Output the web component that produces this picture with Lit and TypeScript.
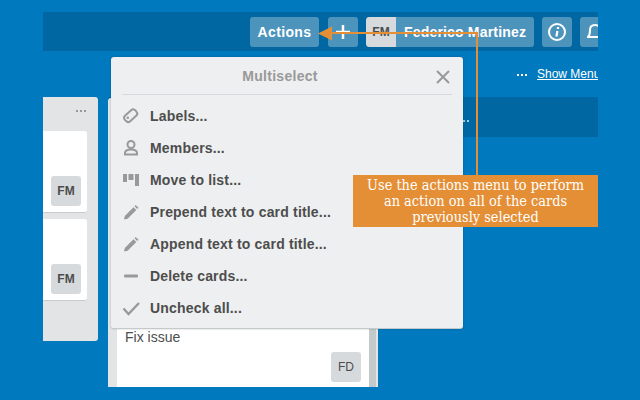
import { LitElement, html, css, svg } from "lit";
import { customElement } from "lit/decorators.js";

const icons: Record<string, unknown> = {
  tag: svg`<rect x="1.500" y="5" width="14" height="7.500" rx="3" fill="none" stroke="#999" stroke-width="2" transform="rotate(-42 8.500 8.500)"/><circle cx="5.800" cy="10.800" r="1.300" fill="#999"/>`,
  user: svg`<circle cx="9" cy="5.500" r="3.500" fill="none" stroke="#999" stroke-width="2"/><path d="M3 15.500v-1.500c0-2.200 2-3.500 6-3.500s6 1.300 6 3.500v1.500z" fill="none" stroke="#999" stroke-width="2"/>`,
  list: svg`<rect x="1" y="3" width="4" height="8" fill="#999"/><rect x="6.500" y="3" width="5" height="6" fill="#999"/><rect x="13" y="3" width="4" height="12" fill="#999"/>`,
  pen: svg`<path d="M2 16.500l.8-3.600L11.500 4.200l2.800 2.800L5.600 15.700z" fill="#999"/><path d="M12.500 3.200l1.200-1.200 2.800 2.800-1.200 1.200z" fill="#999"/>`,
  dash: svg`<rect x="2" y="7.500" width="14" height="3" rx="1" fill="#999"/>`,
  check: svg`<path d="M1.500 9.500l5 5.500L17 4" fill="none" stroke="#999" stroke-width="2.400"/>`,
};

const items = [
  ["tag", "Labels..."],
  ["user", "Members..."],
  ["list", "Move to list..."],
  ["pen", "Prepend text to card title..."],
  ["pen", "Append text to card title..."],
  ["dash", "Delete cards..."],
  ["check", "Uncheck all..."],
];

@customElement("app-root")
export class AppRoot extends LitElement {
  static styles = css`
    :host { display: block; width: 640px; height: 400px; background: #0079bf; overflow: hidden; font-family: "Liberation Sans", Arial, sans-serif; }
    .stage { position: relative; margin-left: 43px; width: 555px; height: 400px; padding-top: 12px; box-sizing: border-box; overflow: hidden; }
    .topbar { height: 39px; background: #0067a3; display: flex; justify-content: flex-end; align-items: center; gap: 8px; overflow: hidden; }
    .btn { height: 30px; border-radius: 3px; background: #4d94bc; color: #fff; font-weight: 700; font-size: 14px; letter-spacing: .18px; display: flex; align-items: center; justify-content: center; flex: none; }
    .actions { width: 69px; margin-right: 1px; letter-spacing: .35px; }
    .plus { width: 30px; }
    .profile { width: 168px; justify-content: flex-start; overflow: hidden; }
    .fm { width: 30px; height: 30px; background: #d6dadc; color: #4d4d4d; font-size: 12px; font-weight: 700; display: flex; align-items: center; justify-content: center; border-radius: 3px 0 0 3px; letter-spacing: 0; }
    .name { margin-left: 8px; white-space: nowrap; }
    .info { width: 30px; }
    .bell { justify-content: flex-start; border-radius: 3px 0 0 3px; overflow: hidden; padding-left: 7px; box-sizing: content-box; width: 11px; }
    .sub { height: 47px; display: flex; justify-content: flex-end; align-items: center; color: #fff; font-size: 12px; font-weight: 400; gap: 10px; white-space: nowrap; }
    .dots { display: flex; gap: 2px; }
    .dots i { width: 2px; height: 2px; background: currentColor; display: block; }
    .show { text-decoration: underline; width: 61px; overflow: hidden; margin-top: -1px; }
    .lane { height: 40px; margin-left: 65px; background: #0067a3; position: absolute; left: 0; right: 0; top: 97px; }
    .lane .dots { position: absolute; left: 351px; top: 23px; color: #a8cce0; }
    .list-a { position: absolute; left: 0; top: 97px; width: 55px; height: 244px; background: #e2e4e6; border-radius: 0 3px 3px 0; padding: 34px 11px 0 0; box-sizing: border-box; display: flex; flex-direction: column; gap: 6px; }
    .list-a .dots { position: absolute; right: 12px; top: 13px; color: #999; }
    .card { background: #fff; border-radius: 0 3px 3px 0; border-bottom: 1px solid #ccc; height: 82px; box-sizing: border-box; display: flex; justify-content: flex-end; align-items: flex-end; padding: 0 6px 6px 0; }
    .av { width: 30px; height: 30px; border-radius: 3px; background: #d6dadc; color: #4d4d4d; font-size: 12px; font-weight: 700; display: flex; align-items: center; justify-content: center; }
    .list-b { position: absolute; left: 65px; top: 98px; width: 270px; height: 289px; background: #e2e4e6; border-radius: 3px 0 0 0; display: flex; align-items: flex-end; padding: 0 9px; box-sizing: border-box; }
    .card-b { width: 100%; height: 72px; background: #fff; font-size: 14px; color: #4d4d4d; position: relative; padding: 14px 8px; box-sizing: border-box; }
    .card-b .av { position: absolute; right: 8px; bottom: 5px; font-weight: 400; }
    .scroll { position: absolute; right: 2px; bottom: 0; width: 7px; height: 100px; background: #c4c9cc; }
    .menu { position: absolute; left: 68px; top: 57px; width: 352px; height: 272px; background: #edeff0; border-radius: 3px; border-bottom: 1px solid #c4c9cc; box-shadow: 0 0 2px rgba(0,0,0,.25); box-sizing: border-box; padding: 0 11px; }
    .mhead { height: 38px; border-bottom: 1px solid #d6dadc; display: flex; align-items: center; justify-content: center; color: #999; font-size: 14px; font-weight: 700; letter-spacing: .3px; position: relative; padding-right: 14px; box-sizing: border-box; }
    .close { position: absolute; right: 2px; top: 13px; width: 14px; height: 14px; }
    .mbody { display: flex; flex-direction: column; padding-top: 5px; }
    .mi { height: 32px; display: flex; align-items: center; gap: 10px; color: #4d4d4d; font-size: 14px; font-weight: 700; letter-spacing: .18px; white-space: nowrap; }
    .mi svg { width: 18px; height: 18px; flex: none; }
    .call { position: absolute; left: 310px; top: 175px; width: 245px; height: 52px; background: #e48e36; color: #fff; font-family: "DejaVu Serif Condensed", "DejaVu Serif", serif; font-size: 14.400px; line-height: 16px; text-align: center; padding-top: 2px; box-sizing: border-box; }
    .arrow { position: absolute; left: 0; top: 0; width: 555px; height: 180px; pointer-events: none; }
  `;

  render() {
    const dots = html`<span class="dots"><i></i><i></i><i></i></span>`;
    return html`<div class="stage">
      <div class="topbar">
        <div class="btn actions">Actions</div>
        <div class="btn plus"><svg width="16" height="16" viewBox="0 0 16 16"><path d="M1 8h14M8 1v14" stroke="#fff" stroke-width="2.500"/></svg></div>
        <div class="btn profile"><span class="fm">FM</span><span class="name">Federico Martinez</span></div>
        <div class="btn info"><svg width="20" height="20" viewBox="0 0 20 20"><circle cx="10" cy="10" r="8" fill="none" stroke="#fff" stroke-width="2"/><path d="M11 5v2M10.400 9l-1 5.500" stroke="#fff" stroke-width="2.200"/></svg></div>
        <div class="btn bell"><svg width="16" height="20" viewBox="0 0 16 20" style="flex:none"><path d="M1 15c2-2 2-4 2-7s2-5 5-5 5 2 5 5 0 5 2 7z" fill="none" stroke="#fff" stroke-width="2"/></svg></div>
      </div>
      <div class="sub">${dots}<span class="show">Show Menu</span></div>
      <div class="lane">${dots}</div>
      <div class="list-a">${dots}
        <div class="card"><span class="av">FM</span></div>
        <div class="card"><span class="av">FM</span></div>
      </div>
      <div class="list-b">
        <div class="card-b">Fix issue<span class="av">FD</span></div>
        <span class="scroll"></span>
      </div>
      <div class="menu">
        <div class="mhead">Multiselect
          <svg class="close" viewBox="0 0 14 14"><path d="M1 1l12 12M13 1L1 13" stroke="#999" stroke-width="2"/></svg>
        </div>
        <div class="mbody">
          ${items.map(([i, t]) => html`<div class="mi"><svg viewBox="0 0 18 18">${icons[i]}</svg><span>${t}</span></div>`)}
        </div>
      </div>
      <div class="call">Use the actions menu to perform<br />an action on all of the cards<br />previously selected</div>
      <svg class="arrow" viewBox="0 0 555 180"><path d="M283 33h151v142" fill="none" stroke="#e48e36" stroke-width="2"/><path d="M275 33.500l14-7v14z" fill="#e48e36"/></svg>
    </div>`;
  }
}
